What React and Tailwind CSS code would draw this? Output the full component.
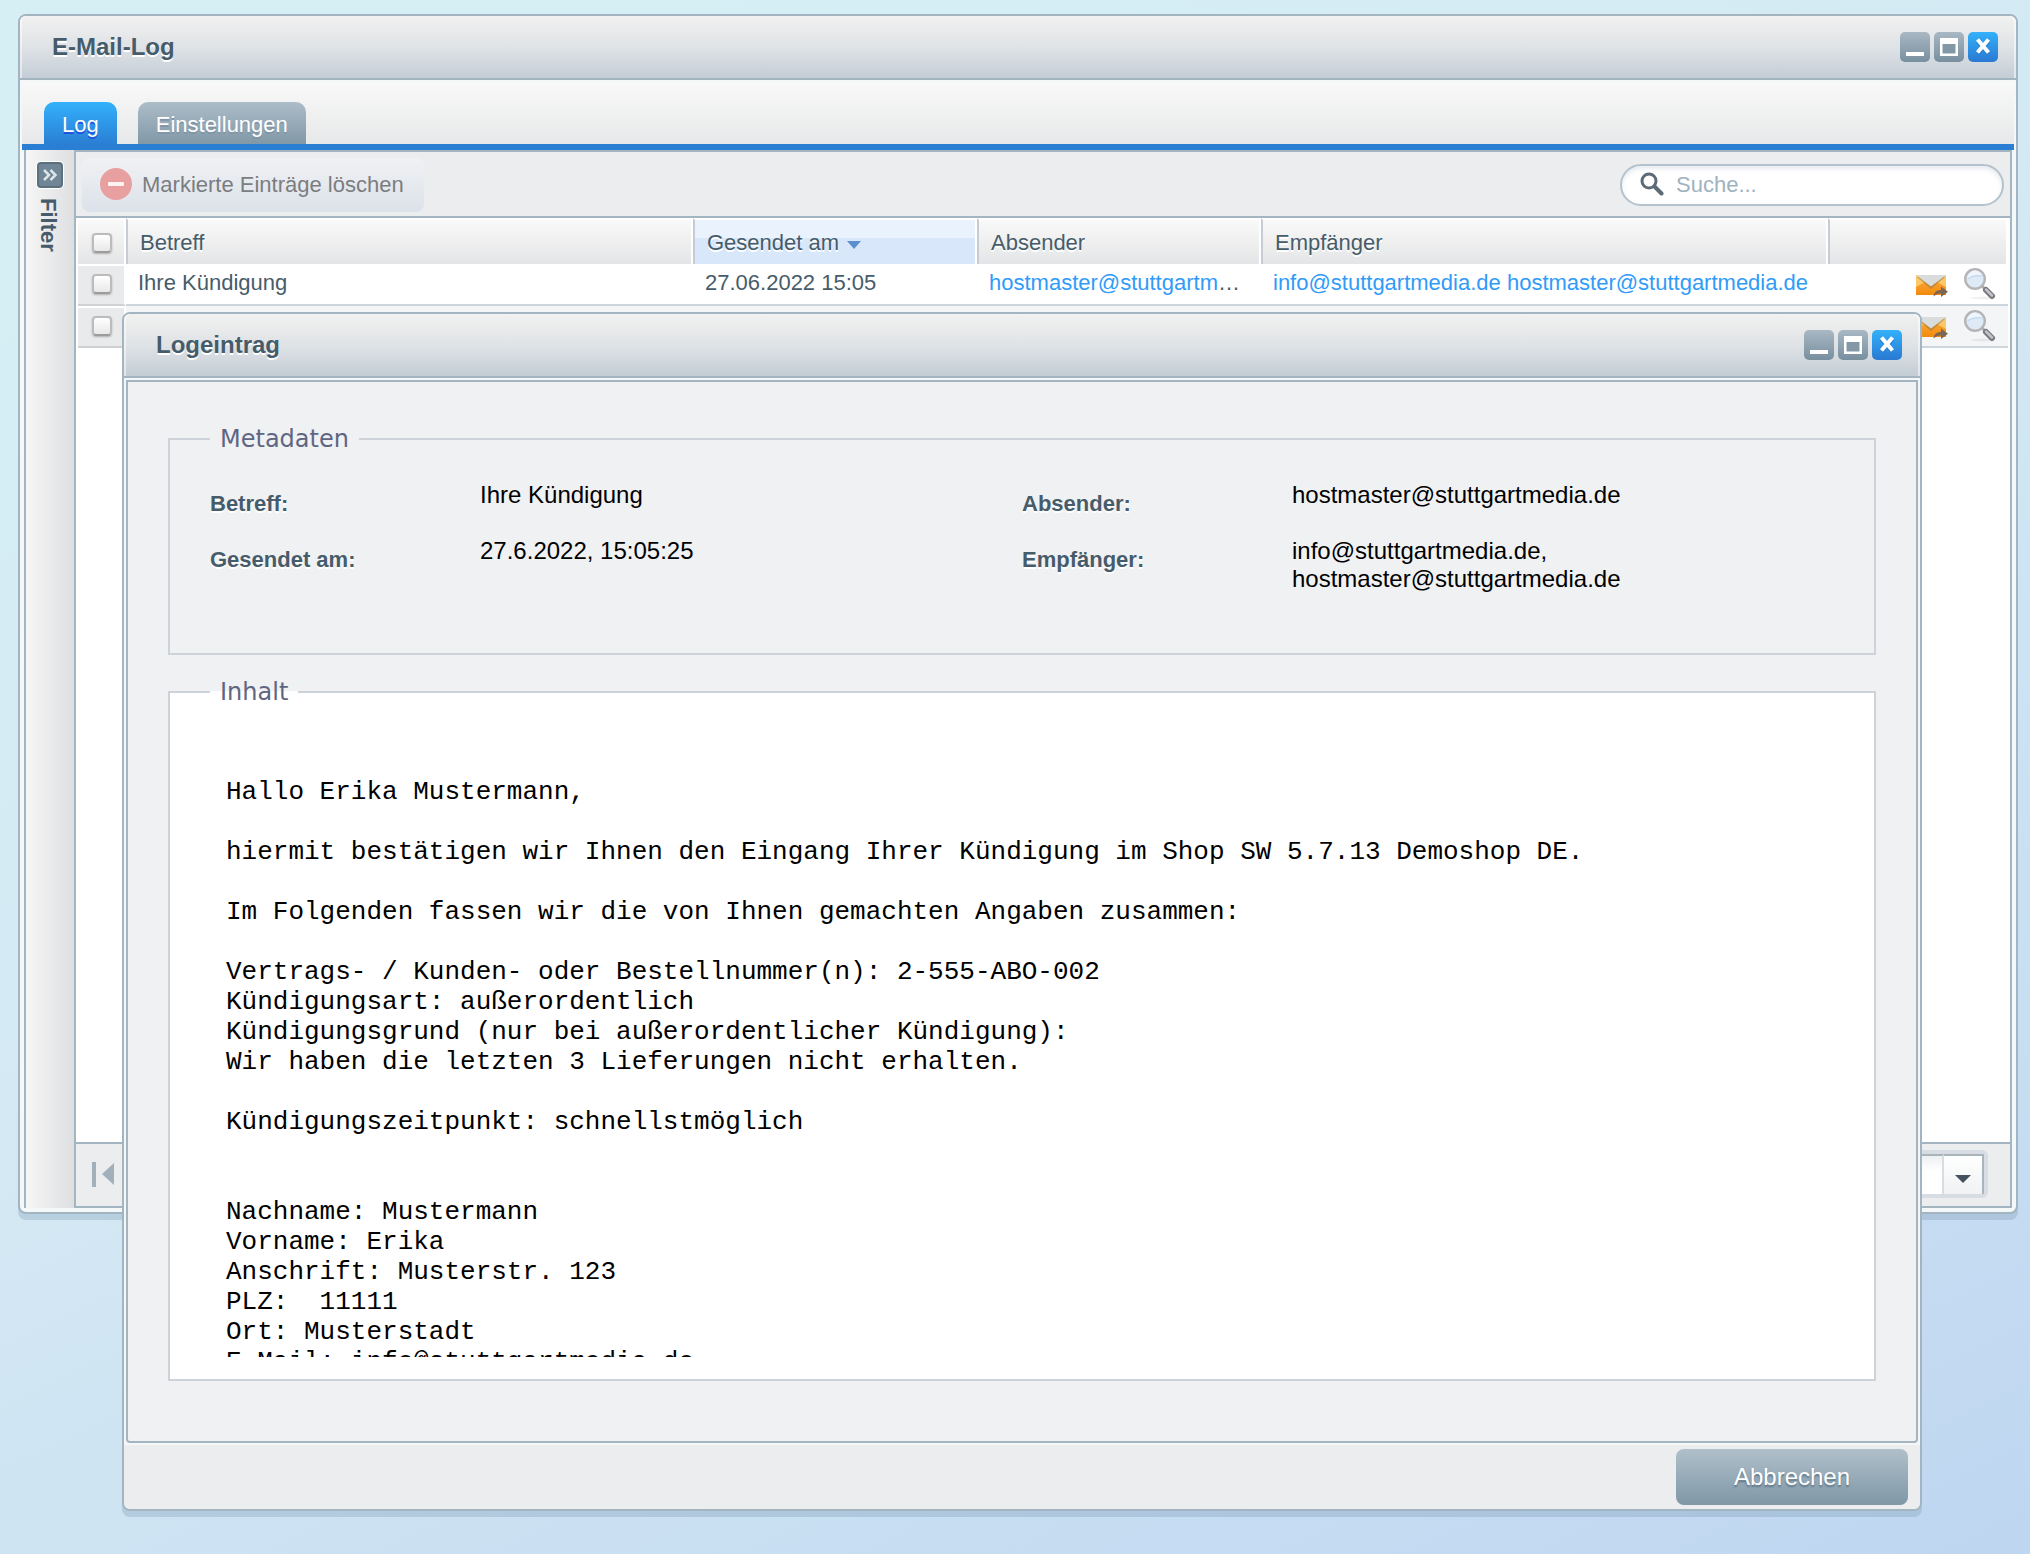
import React, { useState } from "react";

const ENTRIES = [
  {
    id: 1,
    subject: "Ihre Kündigung",
    sentAt: "27.06.2022 15:05",
    sender: "hostmaster@stuttgartmedia.de",
    recipients: ["info@stuttgartmedia.de", "hostmaster@stuttgartmedia.de"],
  },
  {
    id: 2,
    subject: "Ihre Kündigung",
    sentAt: "27.06.2022 15:05",
    sender: "hostmaster@stuttgartmedia.de",
    recipients: ["info@stuttgartmedia.de", "hostmaster@stuttgartmedia.de"],
  },
];

const MAIL_TEXT = `Hallo Erika Mustermann,

hiermit bestätigen wir Ihnen den Eingang Ihrer Kündigung im Shop SW 5.7.13 Demoshop DE.

Im Folgenden fassen wir die von Ihnen gemachten Angaben zusammen:

Vertrags- / Kunden- oder Bestellnummer(n): 2-555-ABO-002
Kündigungsart: außerordentlich
Kündigungsgrund (nur bei außerordentlicher Kündigung):
Wir haben die letzten 3 Lieferungen nicht erhalten.

Kündigungszeitpunkt: schnellstmöglich


Nachname: Mustermann
Vorname: Erika
Anschrift: Musterstr. 123
PLZ:  11111
Ort: Musterstadt
E-Mail: info@stuttgartmedia.de`;

const MailIcon = () => (
  <svg className="h-6 w-8" viewBox="0 0 32 24" fill="none">
    <defs>
      <linearGradient id="mail-body" x1="0" y1="0" x2="0" y2="1">
        <stop offset="0" stopColor="#fbb040" />
        <stop offset="1" stopColor="#f28a0e" />
      </linearGradient>
    </defs>
    <path d="M0 1h30v20H0z" fill="url(#mail-body)" />
    <path d="M0 1v12l9-5zM30 1v12l-9-5z" fill="#fdc968" />
    <path d="M1 3l14 12L29 3z" fill="#a37c3c" opacity="0.6" />
    <path d="M0 1h30L15 12.500z" fill="#d9dcdd" />
    <path
      d="M17.500 22.500c.5-4.500 3.500-6.500 7.500-6.500v-3.500l7 5.200-7 5.300v-3.400c-3-.2-5 .9-7.500 2.900z"
      fill="#7a6652"
    />
  </svg>
);

const ZoomIcon = () => (
  <svg className="h-8 w-8" viewBox="0 0 32 32" fill="none">
    <ellipse cx="19" cy="30" rx="12" ry="1.500" fill="#000" opacity="0.06" />
    <path d="M18 18l4 4" stroke="#a9a9ad" strokeWidth="3" />
    <path d="M22 22l6 6" stroke="#77777d" strokeWidth="6" strokeLinecap="round" />
    <path d="M22 21.500l6 6" stroke="#c3c3ca" strokeWidth="2.500" strokeLinecap="round" />
    <circle cx="11" cy="11" r="9.800" fill="#dfeaf7" stroke="#b5b5b8" strokeWidth="2.400" />
    <path d="M3 12c4-4 10-5 16-3-1-4-4-6.500-8-6.500S4 5 3 12z" fill="#eef5fc" />
    <path d="M3.500 11c4-3 8-4 15-3" stroke="#c3daf0" strokeWidth="1.500" />
  </svg>
);

const WindowButton = ({ label, primary, children }) => (
  <button
    type="button"
    aria-label={label}
    className={`flex h-[30px] w-[30px] items-center justify-center rounded-[5px] bg-linear-to-b ${
      primary ? "from-[#33b1fb] to-[#2a79d2]" : "from-[#a9b8c3] to-[#788f9f]"
    }`}
  >
    <svg className="h-[30px] w-[30px]" viewBox="0 0 30 30" fill="none">
      {children}
    </svg>
  </button>
);

const TitleBar = ({ title }) => (
  <header className="flex h-16 items-center justify-between rounded-t-md border-b-2 border-[#a3b5c1] bg-linear-to-b from-[#f1f1f0] via-[#dfe3e6] to-[#c4cdd6] pl-8 pr-[18px] shadow-[inset_2px_0_0_rgba(255,255,255,0.5),inset_-2px_0_0_rgba(255,255,255,0.5)]">
    <h2 className="text-2xl font-bold text-[#475c6a] [text-shadow:0_2px_0_#fff]">{title}</h2>
    <div className="flex gap-1">
      <WindowButton label="Minimieren">
        <path d="M6 20h18v4H6z" fill="#fff" />
      </WindowButton>
      <WindowButton label="Maximieren">
        <path d="M6 6h18v18H6z" fill="#fff" />
        <path d="M8.500 12h13v9.500h-13z" fill="#8398a6" />
      </WindowButton>
      <WindowButton label="Schließen" primary>
        <path d="M9.500 9l11 12.500M20.500 9l-11 12.500" stroke="#1d62ad" strokeWidth="4.500" opacity="0.4" />
        <path d="M9.500 7.500l11 13M20.500 7.500l-11 13" stroke="#fff" strokeWidth="4" />
      </WindowButton>
    </div>
  </header>
);

const GridCheckbox = ({ label, ...props }) => (
  <input
    type="checkbox"
    aria-label={label}
    className="block h-5 w-5 appearance-none rounded-[4px] border-2 border-[#bcbcbc] border-b-[#9c9c9c] bg-linear-to-b from-white to-[#e8e8e8] shadow-[0_1px_2px_rgba(0,0,0,0.25)] checked:from-[#33b1fb] checked:to-[#2a79d2]"
    {...props}
  />
);

const HeaderCell = ({ children, sorted }) => (
  <th
    className={`border-l-2 border-r-2 border-t-2 border-l-[#c5ccd3] border-r-white border-t-white pl-3 pt-[2px] text-left font-normal [text-shadow:0_2px_0_#fff] ${
      sorted
        ? "bg-linear-to-b from-[#eaf3fd] from-42% to-[#d8e7fa] to-42%"
        : "bg-linear-to-b from-[#f9f9f9] to-[#e4e5e6]"
    }`}
  >
    {children}
  </th>
);

const MailLink = ({ address }) => (
  <a href={`mailto:${address}`} className="text-[#309bf8]">
    {address}
  </a>
);

const LogGrid = () => {
  const [selected, setSelected] = useState([]);

  const toggle = (id) => {
    setSelected((prev) => (prev.includes(id) ? prev.filter((x) => x !== id) : [...prev, id]));
  };

  return (
    <div className="mx-[2px] h-[924px] bg-white">
      <table className="w-full table-fixed border-separate border-spacing-0 text-[22px] leading-7 text-[#475c6a]">
        <colgroup>
          <col className="w-12" />
          <col />
          <col className="w-[284px]" />
          <col className="w-[284px]" />
          <col />
          <col className="w-[180px]" />
        </colgroup>
        <thead>
          <tr className="h-[46px]">
            <th className="border-r-2 border-t-2 border-white bg-linear-to-b from-[#f9f9f9] to-[#e4e5e6] pl-3.5 pt-[2px]">
              <GridCheckbox
                label="Alle auswählen"
                checked={selected.length === ENTRIES.length}
                onChange={(e) => setSelected(e.target.checked ? ENTRIES.map((x) => x.id) : [])}
              />
            </th>
            <HeaderCell>Betreff</HeaderCell>
            <HeaderCell sorted>
              <span className="flex items-center gap-2">
                Gesendet am
                <svg className="mt-1 h-2 w-3.5" viewBox="0 0 14 8">
                  <path d="M0 0h14L7 8z" fill="#5d8fd0" />
                </svg>
              </span>
            </HeaderCell>
            <HeaderCell>Absender</HeaderCell>
            <HeaderCell>Empfänger</HeaderCell>
            <HeaderCell />
          </tr>
        </thead>
        <tbody>
          {ENTRIES.map((entry) => (
            <tr key={entry.id} className="h-[42px] even:bg-[#f3f5f7]">
              <td className="border-b-2 border-r-2 border-t-2 border-b-[#cfd1d3] border-r-white border-t-white bg-[#e8eaec] pb-[2px] pl-3.5">
                <GridCheckbox
                  label={`${entry.subject} auswählen`}
                  checked={selected.includes(entry.id)}
                  onChange={() => toggle(entry.id)}
                />
              </td>
              <td className="truncate border-b-2 border-[#ced6dd] px-3 pb-[2px]">{entry.subject}</td>
              <td className="truncate border-b-2 border-[#ced6dd] px-3 pb-[2px]">{entry.sentAt}</td>
              <td className="truncate border-b-2 border-[#ced6dd] px-3 pb-[2px]">
                <MailLink address={entry.sender} />
              </td>
              <td className="truncate border-b-2 border-[#ced6dd] px-3 pb-[2px]">
                {entry.recipients.map((address, i) => (
                  <React.Fragment key={address}>
                    {i > 0 && " "}
                    <MailLink address={address} />
                  </React.Fragment>
                ))}
              </td>
              <td className="border-b-2 border-[#ced6dd] pr-3">
                <div className="flex items-center justify-end gap-4">
                  <button type="button" aria-label="E-Mail erneut senden" className="pt-1">
                    <MailIcon />
                  </button>
                  <button type="button" aria-label="Eintrag anzeigen">
                    <ZoomIcon />
                  </button>
                </div>
              </td>
            </tr>
          ))}
        </tbody>
      </table>
    </div>
  );
};

const Toolbar = () => (
  <div className="flex h-[66px] items-center justify-between border-b-2 border-[#a3b5c1] bg-[#ebedee] px-1.5 pt-[2px]">
    <button
      type="button"
      disabled
      className="flex h-[54px] items-center gap-2.5 rounded-lg bg-linear-to-b from-[#f0f1f3] to-[#dce2ea] pb-[2px] pl-[18px] pr-5 text-[22px] text-[#7b7d80]"
    >
      <svg className="h-8 w-8" viewBox="0 0 32 32">
        <circle cx="16" cy="16" r="16" fill="#e79f9f" />
        <rect x="8" y="14" width="16" height="4" rx="1" fill="#fdf3f3" />
      </svg>
      Markierte Einträge löschen
    </button>
    <label className="flex h-[42px] w-96 items-center gap-3 rounded-full border-2 border-[#b4c2cd] bg-white pb-[2px] pl-[18px] pr-4 shadow-[inset_0_3px_4px_rgba(160,175,190,0.25)]">
      <svg className="h-6 w-6 shrink-0" viewBox="0 0 24 24" fill="none">
        <circle cx="9" cy="9" r="7" stroke="#5b6b78" strokeWidth="3" />
        <path d="M14.500 14.500l7 7" stroke="#5b6b78" strokeWidth="4" strokeLinecap="round" />
      </svg>
      <input
        type="text"
        aria-label="Suche"
        placeholder="Suche..."
        className="min-w-0 flex-1 bg-transparent text-[22px] text-[#475c6a] outline-none placeholder:text-[#9fb2c0]"
      />
    </label>
  </div>
);

const PagingBar = () => (
  <div className="flex h-16 items-center justify-between border-t-2 border-[#a3b5c1] bg-[#ebedee] pb-[2px] pl-3.5 pr-[22px]">
    <button type="button" aria-label="Erste Seite" disabled>
      <svg className="h-[26px] w-[26px]" viewBox="0 0 26 26" fill="#a2b0bb">
        <path d="M2 1h4v25H2zM24 2v22L12 13z" />
      </svg>
    </button>
    <div className="flex h-12 items-stretch rounded-md border-4 border-[#d8dde3] bg-white">
      <select
        aria-label="Einträge pro Seite"
        defaultValue="20"
        className="w-[115px] appearance-none border-r-2 border-t-2 border-r-[#d8dde3] border-t-[#a9b4bd] bg-linear-to-b from-[#edf0f1] to-white to-40% pl-3 text-[22px] text-[#475c6a]"
      >
        <option value="20">20</option>
        <option value="40">40</option>
      </select>
      <span className="pointer-events-none flex w-10 items-center justify-center border-r-2 border-t-2 border-[#a9b4bd] bg-linear-to-b from-white to-[#f0f2f3] pt-2">
        <svg className="h-2 w-4" viewBox="0 0 16 8">
          <path d="M0 0h16L8 8z" fill="#43525e" />
        </svg>
      </span>
    </div>
  </div>
);

const LogWindow = () => {
  const [tab, setTab] = useState("log");
  const active = "from-[#33b1fb] to-[#2a7fd4] [text-shadow:0_2px_0_#1e4fe0]";
  const inactive = "from-[#adbdc8] to-[#8198a7] [text-shadow:0_2px_0_#8095a4]";

  return (
    <section className="rounded-lg border-2 border-[#a3b5c1] bg-[#f5f8f9] pb-1 shadow-[0_6px_0_rgba(120,150,175,0.3)]">
      <TitleBar title="E-Mail-Log" />
      <div className="mx-[2px] mt-[2px] flex h-[68px] items-end gap-[21px] border-b-6 border-[#2a7fd4] bg-linear-to-b from-[#f9f9f9] to-[#e7e8e9] px-[22px] text-[22px] text-white">
        <button
          type="button"
          onClick={() => setTab("log")}
          className={`h-[42px] rounded-t-[10px] bg-linear-to-b px-[18px] pt-[2px] ${tab === "log" ? active : inactive}`}
        >
          Log
        </button>
        <button
          type="button"
          onClick={() => setTab("settings")}
          className={`h-[42px] rounded-t-[10px] bg-linear-to-b px-[18px] pt-[2px] ${tab === "settings" ? active : inactive}`}
        >
          Einstellungen
        </button>
      </div>
      <div className="flex pl-1 pr-1">
        {/* Collapsed filter panel */}
        <aside className="flex w-[50px] shrink-0 flex-col items-center gap-2.5 border-l-2 border-[#a3b5c1] bg-linear-to-r from-[#f6f6f6] to-[#dedfe1] pt-3">
          <button
            type="button"
            aria-label="Filter ausklappen"
            className="flex h-[26px] w-[26px] items-center justify-center rounded-[4px] border-2 border-[#5b6f7d] bg-[#708595] shadow-[0_0_0_1px_#fff]"
          >
            <svg className="h-4 w-4" viewBox="0 0 16 16" fill="none" stroke="#dde5ea" strokeWidth="2.500">
              <path d="M2 3l5 5-5 5M8.500 3l5 5-5 5" />
            </svg>
          </button>
          <span className="mr-1 text-[22px] font-bold leading-6 text-[#475c6a] [writing-mode:vertical-rl]">
            Filter
          </span>
        </aside>
        <main className="min-w-0 flex-1 border-2 border-[#a3b5c1] bg-white">
          <Toolbar />
          <LogGrid />
          <PagingBar />
        </main>
      </div>
    </section>
  );
};

const Field = ({ label, children }) => (
  <>
    <dt className="pt-[9px] text-[22px] font-bold leading-7 text-[#475c6a] [text-shadow:0_2px_0_#fff]">{label}:</dt>
    <dd className="text-2xl leading-7 text-black">{children}</dd>
  </>
);

const EntryWindow = () => (
  <section
    role="dialog"
    aria-label="Logeintrag"
    className="absolute left-[122px] right-[108px] top-[312px] rounded-lg border-2 border-[#a3b5c1] bg-[#f4f6f8] shadow-[0_6px_0_rgba(120,150,175,0.3)]"
  >
    <TitleBar title="Logeintrag" />
    <div className="m-[2px] rounded-b-[4px] border-2 border-[#a3b5c1] bg-[#f0f1f3] px-10 pb-[60px] pt-[42px]">
      <fieldset className="min-w-0 border-2 border-[#cdd3d9] px-10 pb-[60px]">
        <legend className="px-2.5 font-['DejaVu_Sans',sans-serif] text-2xl leading-[30px] text-[#5f6682]">
          Metadaten
        </legend>
        <dl className="grid grid-cols-[270px_1fr_270px_1fr] gap-y-[19px] pt-[27px]">
          <Field label="Betreff">Ihre Kündigung</Field>
          <Field label="Absender">hostmaster@stuttgartmedia.de</Field>
          <Field label="Gesendet am">27.6.2022, 15:05:25</Field>
          <Field label="Empfänger">
            info@stuttgartmedia.de,
            <br />
            hostmaster@stuttgartmedia.de
          </Field>
        </dl>
      </fieldset>
      <fieldset className="mt-[22px] min-w-0 border-2 border-[#cdd3d9] bg-white px-10 pb-[22px]">
        <legend className="px-2.5 font-['DejaVu_Sans',sans-serif] text-2xl leading-[30px] text-[#5f6682]">
          Inhalt
        </legend>
        <div className="h-[650px] overflow-hidden px-4 pt-[70px]">
          <pre className="font-['Liberation_Mono',monospace] text-[26px] leading-[30px] text-black">{MAIL_TEXT}</pre>
        </div>
      </fieldset>
    </div>
    <footer className="flex justify-end rounded-b-md bg-[#ebedee] px-3 py-1">
      <button
        type="button"
        className="h-14 w-[232px] rounded-lg bg-linear-to-b from-[#b0c0ca] to-[#7f97a7] text-2xl text-white [text-shadow:0_2px_2px_#5d7485]"
      >
        Abbrechen
      </button>
    </footer>
  </section>
);

const App = () => (
  <div className="relative min-h-screen bg-linear-155 from-[#d6eff5] from-10% via-[#d3e8f3] via-50% to-[#bfd6f1] pb-10 pl-[18px] pr-3 pt-3.5 font-['Liberation_Sans',Arial,sans-serif]">
    <LogWindow />
    <EntryWindow />
  </div>
);

export default App;
